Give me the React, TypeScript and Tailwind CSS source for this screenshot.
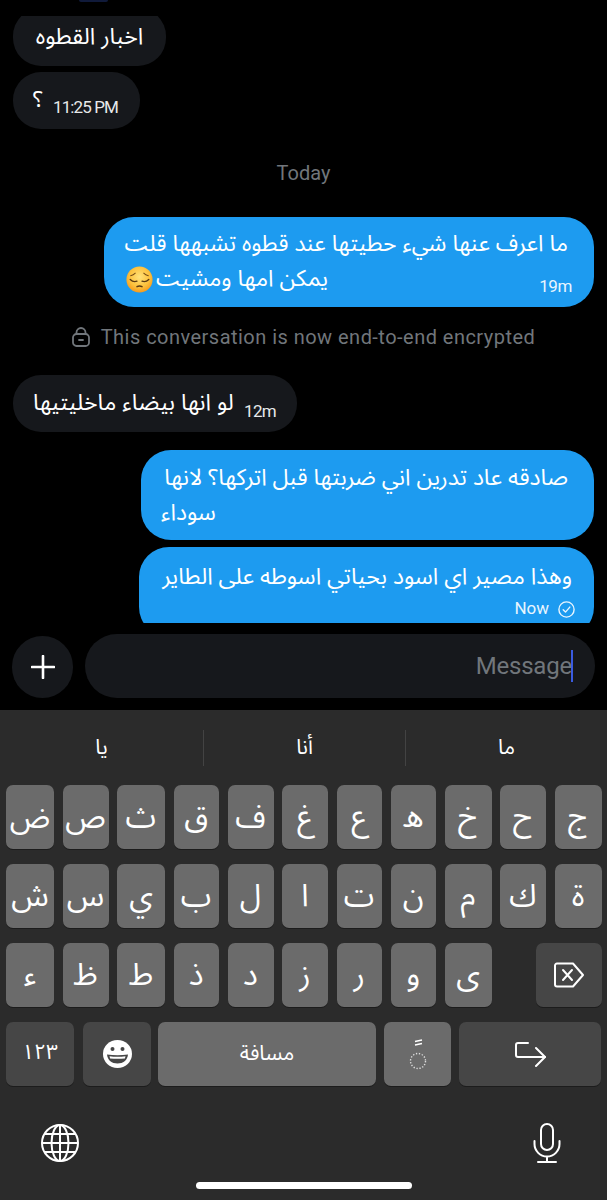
const arabic = { fontFamily: '"Noto Sans Arabic", "DejaVu Sans", sans-serif' };

const row1 = ["ض", "ص", "ث", "ق", "ف", "غ", "ع", "ه", "خ", "ح", "ج"];
const row2 = ["ش", "س", "ي", "ب", "ل", "ا", "ت", "ن", "م", "ك", "ة"];
const row3 = ["ء", "ظ", "ط", "ذ", "د", "ز", "ر", "و", "ى"];

function PensiveFace() {
    return (
        <svg width="27" height="27" viewBox="0 0 32 32" className="ml-[2px] shrink-0">
            <defs>
                <radialGradient id="face" cx="50%" cy="40%" r="60%">
                    <stop offset="0%" stopColor="#ffe27a" />
                    <stop offset="65%" stopColor="#fdc13c" />
                    <stop offset="100%" stopColor="#f59a1d" />
                </radialGradient>
            </defs>
            <circle cx="16" cy="16" r="15.5" fill="url(#face)" />
            <path d="M5 16c2 2 5 3 8 2M27 16c-2 2-5 3-8 2" fill="none" stroke="#5b3a12" strokeWidth="1.6" strokeLinecap="round" />
            <path d="M5.5 11.5c2-.4 4-1.4 5.5-3M26.5 11.5c-2-.4-4-1.4-5.5-3" fill="none" stroke="#7a4f16" strokeWidth="1.2" strokeLinecap="round" />
            <path d="M13 24.5c2-1.2 4-1.2 6 0" fill="none" stroke="#5b3a12" strokeWidth="1.7" strokeLinecap="round" />
        </svg>
    );
}

function Key({ children, dark, className = "" }: { children: React.ReactNode; dark?: boolean; className?: string }) {
    return (
        <div
            className={`flex h-[64px] items-center justify-center rounded-[7px] text-white shadow-[0_1px_0_#1c1c1c] ${dark ? "bg-[#464646]" : "bg-[#6b6b6b]"} ${className}`}
        >
            {children}
        </div>
    );
}

export default function App() {
    return (
        <div className="flex h-[1200px] w-[607px] flex-col overflow-hidden bg-black" style={{ fontFamily: "Roboto, sans-serif" }}>
            {/* Chat */}
            <div className="h-[634px] shrink-0 overflow-hidden">
                <div className="flex h-[623px] flex-col overflow-hidden">
                    <div className="ml-[79px] h-[2px] w-[29px] shrink-0 rounded-b-full bg-[#101a3a]" />
                    {/* first bubble is cut off by the scroll edge */}
                    <div className="mt-[14px] flex h-[50px] shrink-0 flex-col justify-end overflow-hidden">
                        <div className="ml-[13px] flex h-[58px] w-[153px] shrink-0 items-center justify-center rounded-[28px] bg-[#16181c] text-[23px] text-white" style={arabic} dir="rtl">
                            اخبار القطوه
                        </div>
                    </div>
                    <div className="ml-[13px] mt-[6px] flex h-[57px] w-[127px] shrink-0 items-center gap-[10px] rounded-[28px] bg-[#16181c] pl-[20px] text-white">
                        <span className="text-[23px]" style={arabic}>؟</span>
                        <span className="mt-[14px] whitespace-nowrap text-[17px] tracking-[-0.9px] text-[#e7e9ea]">11:25 PM</span>
                    </div>

                    <div className="mt-[32px] shrink-0 text-center text-[20px] leading-[24px] text-[#71767b]">Today</div>

                    <div className="ml-[104px] mt-[32px] h-[90px] w-[490px] shrink-0 rounded-[30px] bg-[#1d9bf0] pl-[20px] pr-[26px] pt-[10px] text-white">
                        <div className="h-[35px] whitespace-nowrap text-right text-[22.8px] leading-[35px]" style={arabic} dir="rtl">
                            ما اعرف عنها شيء حطيتها عند قطوه تشبهها قلت
                        </div>
                        <div className="flex h-[35px] items-center justify-between">
                            <div className="flex items-center gap-[3px]">
                                <PensiveFace />
                                <span className="whitespace-nowrap text-[23px]" style={arabic} dir="rtl">يمكن امها ومشيت</span>
                            </div>
                            <span className="-mr-[4px] mt-[14px] text-[17px] tracking-[-0.4px] text-[#e8f5fe]">19m</span>
                        </div>
                    </div>

                    <div className="mt-[18px] flex h-[24px] shrink-0 items-center justify-center gap-[11px] text-[20px] text-[#71767b]">
                        <svg width="18" height="20" viewBox="0 0 18 20" fill="none" stroke="#71767b" strokeWidth="1.8">
                            <rect x="1" y="7" width="16" height="12" rx="3.5" />
                            <path d="M4.5 7V5.5a4.5 4.5 0 0 1 9 0V7" />
                            <path d="M7 13h4" strokeLinecap="round" />
                        </svg>
                        <span className="tracking-[0.47px]">This conversation is now end-to-end encrypted</span>
                    </div>

                    <div className="ml-[13px] mt-[26px] flex h-[57px] w-[284px] shrink-0 items-center justify-between rounded-[28px] bg-[#16181c] pl-[20px] pr-[21px] text-white">
                        <span className="whitespace-nowrap text-[23px]" style={arabic} dir="rtl">لو انها بيضاء ماخليتيها</span>
                        <span className="mt-[16px] text-[17px] tracking-[-0.7px] text-[#e7e9ea]">12m</span>
                    </div>

                    <div className="ml-[141px] mt-[18px] h-[90px] w-[453px] shrink-0 rounded-[30px] bg-[#1d9bf0] pl-[20px] pr-[26px] pt-[10px] text-white">
                        <div className="h-[35px] whitespace-nowrap text-right text-[23px] leading-[35px]" style={arabic} dir="rtl">
                            صادقه عاد تدرين اني ضربتها قبل اتركها؟ لانها
                        </div>
                        <div className="h-[35px] text-left text-[23px] leading-[35px]" style={arabic}>
                            <span dir="rtl">سوداء</span>
                        </div>
                    </div>

                    <div className="ml-[139px] mt-[7px] h-[90px] w-[455px] shrink-0 rounded-[30px] bg-[#1d9bf0] pl-[19px] pr-[22px] pt-[12px] text-white">
                        <div className="h-[35px] whitespace-nowrap text-right text-[23px] leading-[35px]" style={arabic} dir="rtl">
                            وهذا مصير اي اسود بحياتي اسوطه على الطاير
                        </div>
                        <div className="-mr-[3px] mt-[3px] flex h-[24px] items-center justify-end gap-[9px] text-[17px] text-[#e8f5fe]">
                            <span>Now</span>
                            <svg width="17" height="17" viewBox="0 0 17 17" fill="none" stroke="#e8f5fe" strokeWidth="1.4">
                                <circle cx="8.5" cy="8.5" r="7.6" />
                                <path d="M5.2 8.8l2.3 2.3 4.3-5" strokeLinecap="round" strokeLinejoin="round" />
                            </svg>
                        </div>
                    </div>
                </div>
            </div>

            {/* Composer */}
            <div className="flex h-[64px] shrink-0 items-center gap-[12px] pl-[12px] pr-[12px]">
                <div className="mt-[2px] flex h-[62px] w-[61px] shrink-0 items-center justify-center rounded-full bg-[#16181c]">
                    <svg width="24" height="24" viewBox="0 0 24 24" stroke="white" strokeWidth="2.6" strokeLinecap="round">
                        <path d="M12 1v22M1 12h22" />
                    </svg>
                </div>
                <div className="flex h-[64px] flex-1 items-center justify-end rounded-[32px] bg-[#16181c] pr-[22px] text-[24px] text-[#71767b]">
                    <span className="tracking-[-0.2px]">Message</span>
                    <span className="-ml-[1px] h-[32px] w-[2px] bg-[#3a5be0]" />
                </div>
            </div>

            {/* Keyboard */}
            <div className="mt-[12px] flex flex-1 flex-col bg-[#2b2b2b]">
                <div className="flex h-[75px] shrink-0 items-center text-[21px] text-white" style={arabic}>
                    <div className="w-[203px] text-center">يا</div>
                    <div className="h-[36px] w-px bg-[#434343]" />
                    <div className="w-[201px] text-center">أنا</div>
                    <div className="h-[36px] w-px bg-[#434343]" />
                    <div className="flex-1 text-center">ما</div>
                </div>

                <div className="grid grid-cols-[48px_46px_48px_45.5px_46px_46px_45.5px_45.5px_47px_46px_47px] gap-x-[8.5px] gap-y-[15px] pl-[6px] text-[31px]" style={arabic}>
                    {row1.map((k) => <Key key={k}>{k}</Key>)}
                    {row2.map((k) => <Key key={k}>{k}</Key>)}
                    {row3.map((k) => <Key key={k}>{k}</Key>)}
                    <div className="col-span-2 flex justify-end">
                        <Key dark className="w-[66px]">
                            <svg width="32" height="26" viewBox="0 0 32 26" fill="none" stroke="white" strokeWidth="2" strokeLinejoin="round">
                                <path d="M2 3.500a2 2 0 0 1 2-2h16l10 11.500-10 11.500H4a2 2 0 0 1-2-2z" />
                                <path d="M10 8l9 10M19 8l-9 10" strokeLinecap="round" />
                            </svg>
                        </Key>
                    </div>
                </div>

                <div className="mt-[15px] flex pl-[6px] pr-[6px]">
                    <Key dark className="w-[68px] text-[21px]"><span className="-mt-[2px]" style={arabic}>١٢٣</span></Key>
                    <Key dark className="ml-[9px] w-[68px]">
                        <svg width="29" height="28" viewBox="0 0 29 28">
                            <ellipse cx="14.500" cy="14" rx="14.500" ry="14" fill="white" />
                            <circle cx="9.500" cy="9" r="2" fill="#464646" />
                            <circle cx="19.500" cy="9" r="2" fill="#464646" />
                            <path d="M4 14.500c6.500 1.100 14.500 1.100 21 0-.5 5.800-5 9-10.500 9S4.500 20.300 4 14.500z" fill="#464646" />
                            <path d="M6.500 16.300c5 .7 11 .7 16 0l-.6 2.100c-5 .6-9.800.6-14.800 0z" fill="white" />
                        </svg>
                    </Key>
                    <Key className="ml-[7px] w-[218px] text-[21px]"><span style={arabic}>مسافة</span></Key>
                    <Key className="ml-[8px] w-[67px]">
                        <svg width="18" height="34" viewBox="0 0 18 34" fill="none">
                            <path d="M6 4.500l7-1.500M6 8l7-1.500" stroke="white" strokeWidth="1.4" />
                            <circle cx="9" cy="24" r="7.500" stroke="#dddddd" strokeWidth="1.400" strokeDasharray="1.300 1.700" />
                        </svg>
                    </Key>
                    <Key dark className="ml-[8px] w-[142px]">
                        <svg width="31" height="28" viewBox="0 0 31 28" fill="none" stroke="white" strokeWidth="2" strokeLinecap="round" strokeLinejoin="round" className="mt-[2px]">
                            <path d="M13 2H3a2 2 0 0 0-2 2v10a2 2 0 0 0 2 2h27" />
                            <path d="M21 7l9 9-9 9" />
                        </svg>
                    </Key>
                </div>

                <div className="mt-[36px] flex h-[42px] items-center justify-between pl-[41px] pr-[46px]">
                    <svg width="38" height="38" viewBox="0 0 38 38" fill="none" stroke="white" strokeWidth="2">
                        <circle cx="19" cy="19" r="18" />
                        <ellipse cx="19" cy="19" rx="8.500" ry="18" />
                        <path d="M19 1v36M1 19h36M3.500 10h31M3.500 28h31" />
                    </svg>
                    <svg width="28" height="40" viewBox="0 0 28 40" fill="none" stroke="white" strokeWidth="2" strokeLinecap="round">
                        <rect x="8" y="1" width="12" height="26" rx="6" />
                        <path d="M1.500 18v3a12.500 12.500 0 0 0 25 0v-3M14 33.500V39M5 39h18" />
                    </svg>
                </div>

                <div className="ml-[196px] mt-[18px] h-[7px] w-[216px] rounded-full bg-white" />
            </div>
        </div>
    );
}
